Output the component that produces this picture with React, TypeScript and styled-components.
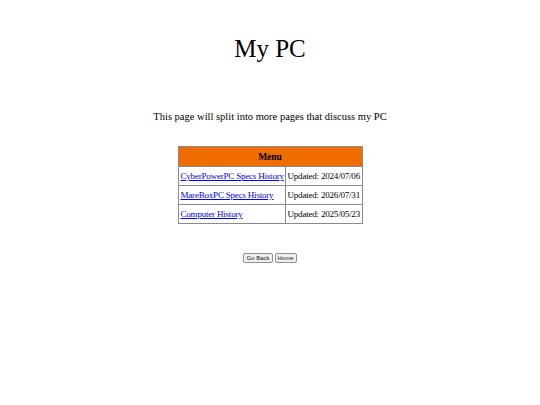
import * as React from "react";
import styled, { createGlobalStyle } from "styled-components";

const rows = [
  { name: "CyberPowerPC Specs History", updated: "2024/07/06" },
  { name: "MareBoxPC Specs History", updated: "2026/07/31" },
  { name: "Computer History", updated: "2025/05/23" },
];

const App = () => {
  return (
    <Page>
      <GlobalStyle />
      <Title>My PC</Title>
      <Intro>This page will split into more pages that discuss my PC</Intro>
      <MenuTable>
        <colgroup>
          <col style={{ width: 107 }} />
          <col style={{ width: 77 }} />
        </colgroup>
        <thead>
          <tr>
            <HeadCell colSpan={2}>Menu</HeadCell>
          </tr>
        </thead>
        <tbody>
          {rows.map((r) => (
            <tr key={r.name}>
              <Cell>
                <MenuLink href="#">{r.name}</MenuLink>
              </Cell>
              <Cell>Updated: {r.updated}</Cell>
            </tr>
          ))}
        </tbody>
      </MenuTable>
      <Buttons>
        <Button type="button">Go Back</Button>
        <Button type="button">Home</Button>
      </Buttons>
    </Page>
  );
};

const GlobalStyle = createGlobalStyle`
  html, body {
    margin: 0;
    padding: 0;
    background: #fff;
  }
`;

const Page = styled.div`
  display: flex;
  flex-direction: column;
  align-items: center;
  font-family: "Liberation Serif", "Times New Roman", serif;
  color: #000;
  padding-top: 35px;
`;

const Title = styled.h1`
  margin: 0;
  font-weight: 400;
  font-size: 25px;
  line-height: 28px;
`;

const Intro = styled.p`
  margin: 48px 0 0;
  font-size: 10.5px;
  line-height: 12px;
`;

const MenuTable = styled.table`
  margin-top: 23px;
  width: 184px;
  table-layout: fixed;
  border-collapse: collapse;
  border: 1px solid #8a8a8a;
  font-size: 9px;
  line-height: 10px;
`;

const HeadCell = styled.th`
  background-color: #ef6c00;
  border: 1px solid #8a8a8a;
  height: 19px;
  padding: 0;
  font-size: 9.5px;
  font-weight: 700;
  text-align: center;
`;

const Cell = styled.td`
  height: 18px;
  padding: 0 2px;
  border: 1px solid #8a8a8a;
  font-weight: 400;
  text-align: left;
  white-space: nowrap;
  overflow: visible;
  letter-spacing: -0.2px;
`;

const MenuLink = styled.a`
  color: #0000ee;
  text-decoration: underline;
`;

const Buttons = styled.div`
  display: flex;
  gap: 2px;
  margin-top: 29px;
`;

const Button = styled.button`
  font-family: "Liberation Sans", Arial, sans-serif;
  font-size: 6px;
  line-height: 6px;
  padding: 1px 2px;
  border: 1px solid #8f8f8f;
  border-radius: 2px;
  background: #efefef;
  color: #222;
`;

export default App;
